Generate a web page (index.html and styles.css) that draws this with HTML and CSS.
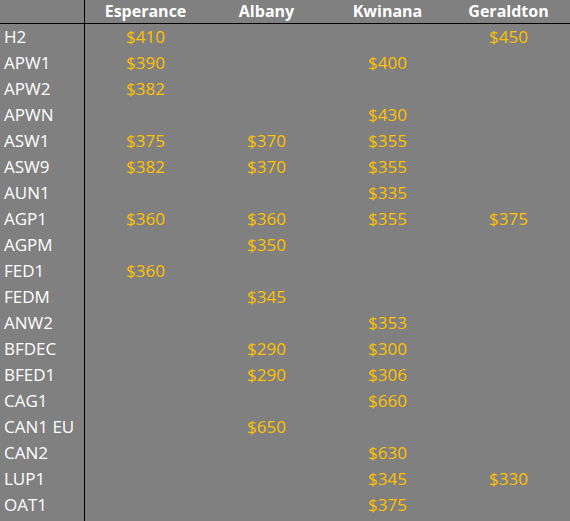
FILE: index.html
```html
<!DOCTYPE html>
<html>
<head>
<meta charset="utf-8">
<link rel="stylesheet" href="styles.css">
</head>
<body>
<div class="sheet">
  <div class="row head">
    <div class="cell label"></div>
    <div class="cell">Esperance</div>
    <div class="cell">Albany</div>
    <div class="cell">Kwinana</div>
    <div class="cell">Geraldton</div>
  </div>
  <div class="row"><div class="cell label">H2</div><div class="cell">$410</div><div class="cell"></div><div class="cell"></div><div class="cell">$450</div></div>
  <div class="row"><div class="cell label">APW1</div><div class="cell">$390</div><div class="cell"></div><div class="cell">$400</div><div class="cell"></div></div>
  <div class="row"><div class="cell label">APW2</div><div class="cell">$382</div><div class="cell"></div><div class="cell"></div><div class="cell"></div></div>
  <div class="row"><div class="cell label">APWN</div><div class="cell"></div><div class="cell"></div><div class="cell">$430</div><div class="cell"></div></div>
  <div class="row"><div class="cell label">ASW1</div><div class="cell">$375</div><div class="cell">$370</div><div class="cell">$355</div><div class="cell"></div></div>
  <div class="row"><div class="cell label">ASW9</div><div class="cell">$382</div><div class="cell">$370</div><div class="cell">$355</div><div class="cell"></div></div>
  <div class="row"><div class="cell label">AUN1</div><div class="cell"></div><div class="cell"></div><div class="cell">$335</div><div class="cell"></div></div>
  <div class="row"><div class="cell label">AGP1</div><div class="cell">$360</div><div class="cell">$360</div><div class="cell">$355</div><div class="cell">$375</div></div>
  <div class="row"><div class="cell label">AGPM</div><div class="cell"></div><div class="cell">$350</div><div class="cell"></div><div class="cell"></div></div>
  <div class="row"><div class="cell label">FED1</div><div class="cell">$360</div><div class="cell"></div><div class="cell"></div><div class="cell"></div></div>
  <div class="row"><div class="cell label">FEDM</div><div class="cell"></div><div class="cell">$345</div><div class="cell"></div><div class="cell"></div></div>
  <div class="row"><div class="cell label">ANW2</div><div class="cell"></div><div class="cell"></div><div class="cell">$353</div><div class="cell"></div></div>
  <div class="row"><div class="cell label">BFDEC</div><div class="cell"></div><div class="cell">$290</div><div class="cell">$300</div><div class="cell"></div></div>
  <div class="row"><div class="cell label">BFED1</div><div class="cell"></div><div class="cell">$290</div><div class="cell">$306</div><div class="cell"></div></div>
  <div class="row"><div class="cell label">CAG1</div><div class="cell"></div><div class="cell"></div><div class="cell">$660</div><div class="cell"></div></div>
  <div class="row"><div class="cell label">CAN1 EU</div><div class="cell"></div><div class="cell">$650</div><div class="cell"></div><div class="cell"></div></div>
  <div class="row"><div class="cell label">CAN2</div><div class="cell"></div><div class="cell"></div><div class="cell">$630</div><div class="cell"></div></div>
  <div class="row"><div class="cell label">LUP1</div><div class="cell"></div><div class="cell"></div><div class="cell">$345</div><div class="cell">$330</div></div>
  <div class="row"><div class="cell label">OAT1</div><div class="cell"></div><div class="cell"></div><div class="cell">$375</div><div class="cell"></div></div>
  <div class="row filler"><div class="cell label"></div></div>
</div>
</body>
</html>
```

FILE: styles.css
```css
html, body {
  margin: 0;
  padding: 0;
  background: #808080;
}
.sheet {
  display: flex;
  flex-direction: column;
  height: 100vh;
  width: 570px;
  font-family: "Open Sans", "Liberation Sans", sans-serif;
  font-size: 17px;
  color: #ffc000;
}
.row {
  display: grid;
  grid-template-columns: 85px repeat(4, 121px);
  height: 26px;
}
.cell {
  display: flex;
  align-items: center;
  justify-content: center;
  line-height: 1;
  white-space: nowrap;
  padding-bottom: 2px;
  box-sizing: border-box;
}
.cell.label {
  justify-content: flex-start;
  padding-left: 4px;
  border-right: 1px solid #000;
  color: #fff;
}
.head {
  height: 24px;
  box-sizing: border-box;
  border-bottom: 1px solid #000;
  color: #fff;
  font-weight: 700;
  font-size: 16px;
}
.filler {
  flex: 1;
  height: auto;
}
```
